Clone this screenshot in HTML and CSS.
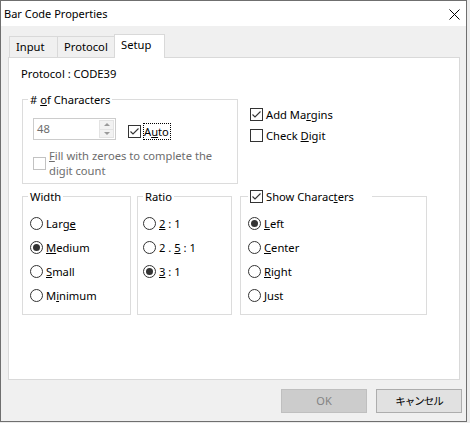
FILE: index.html
```html
<!DOCTYPE html>
<html>
<head>
<meta charset="utf-8">
<link rel="stylesheet" href="styles.css">
</head>
<body>
<div class="window">
  <div class="titlebar">
    <span class="title">Bar Code Properties</span>
    <svg class="close" width="11" height="11" viewBox="0 0 11 11"><path d="M0.5 0.5 L10.5 10.5 M10.5 0.5 L0.5 10.5" stroke="#000" stroke-width="1" fill="none"/></svg>
  </div>
  <div class="client">
    <div class="tabs">
      <div class="tab tab-input">Input</div>
      <div class="tab tab-protocol">Protocol</div>
      <div class="tab tab-setup active">Setup</div>
    </div>
    <div class="panel">
      <div class="proto">Protocol : CODE39</div>
      <div class="row1">
        <fieldset class="grp chars">
          <legend class="lg">#&nbsp;<u>o</u>f Characters</legend>
          <div class="spinrow">
            <div class="spin">
              <span class="spinval">48</span>
              <div class="spinbtns">
                <span class="sb up"><i></i></span>
                <span class="sb down"><i></i></span>
              </div>
            </div>
            <div class="chk auto">
              <span class="cb"><svg width="11" height="11" viewBox="0 0 11 11"><path d="M1.5 5.5 L4 8 L9.5 2.5" stroke="#333" stroke-width="1.1" fill="none"/></svg></span>
              <span class="focus">A<u>u</u>to</span>
            </div>
          </div>
          <div class="chk fill">
            <span class="cb dis"></span>
            <span class="dtext"><u>F</u>ill with zeroes to complete the<br>digit count</span>
          </div>
        </fieldset>
        <div class="opts">
          <div class="chk optrow">
            <span class="cb"><svg width="11" height="11" viewBox="0 0 11 11"><path d="M1.5 5.5 L4 8 L9.5 2.5" stroke="#333" stroke-width="1.1" fill="none"/></svg></span>
            <span>Add Ma<u>r</u>gins</span>
          </div>
          <div class="chk optrow">
            <span class="cb"></span>
            <span>Check <u>D</u>igit</span>
          </div>
        </div>
      </div>
      <div class="row2">
        <fieldset class="grp g-width">
          <legend class="lg">Width</legend>
          <div class="radios">
            <div class="rad"><span class="rb"></span><span>Larg<u>e</u></span></div>
            <div class="rad"><span class="rb on"></span><span><u>M</u>edium</span></div>
            <div class="rad"><span class="rb"></span><span><u>S</u>mall</span></div>
            <div class="rad"><span class="rb"></span><span>M<u>i</u>nimum</span></div>
          </div>
        </fieldset>
        <fieldset class="grp g-ratio">
          <legend class="lg">Ratio</legend>
          <div class="radios">
            <div class="rad"><span class="rb"></span><span><u>2</u> : 1</span></div>
            <div class="rad"><span class="rb"></span><span>2 . <u>5</u> : 1</span></div>
            <div class="rad"><span class="rb on"></span><span><u>3</u> : 1</span></div>
          </div>
        </fieldset>
        <fieldset class="grp g-show">
          <legend class="lg lg-chk">
            <span class="cb"><svg width="11" height="11" viewBox="0 0 11 11"><path d="M1.5 5.5 L4 8 L9.5 2.5" stroke="#333" stroke-width="1.1" fill="none"/></svg></span>
            <span>Show Charac<u>t</u>ers</span>
          </legend>
          <div class="radios">
            <div class="rad"><span class="rb on"></span><span><u>L</u>eft</span></div>
            <div class="rad"><span class="rb"></span><span><u>C</u>enter</span></div>
            <div class="rad"><span class="rb"></span><span><u>R</u>ight</span></div>
            <div class="rad"><span class="rb"></span><span><u>J</u>ust</span></div>
          </div>
        </fieldset>
      </div>
    </div>
    <div class="buttons">
      <button class="btn btn-ok" disabled>OK</button>
      <button class="btn btn-cancel">キャンセル</button>
    </div>
  </div>
</div>
</body>
</html>
```

FILE: styles.css
```css
html, body {
  margin: 0;
  padding: 0;
}
body {
  background: #ececec;
  font-family: "Noto Sans", "Segoe UI", "Liberation Sans", sans-serif;
  font-size: 11.2px;
  color: #000;
  width: 470px;
  height: 423px;
}
u {
  text-decoration-thickness: 1px;
  text-underline-offset: 1px;
}
.window {
  width: 467px;
  height: 422px;
  box-sizing: border-box;
  border: 1px solid #6f6f6f;
  background: #f0f0f0;
  display: flex;
  flex-direction: column;
}
.titlebar {
  height: 25px;
  flex: 0 0 25px;
  background: #fff;
  display: flex;
  align-items: center;
  padding: 0 6px 0 3px;
}
.title {
  flex: 1;
  font-size: 11px;
  line-height: 15px;
}
.close {
  display: block;
  margin-top: 1px;
}
.client {
  flex: 1;
  display: flex;
  flex-direction: column;
  padding: 8px 4px 0 7px;
}
.tabs {
  display: flex;
  align-items: flex-end;
  height: 23px;
  padding-left: 1px;
  position: relative;
  z-index: 1;
}
.tab {
  height: 21px;
  box-sizing: border-box;
  border: 1px solid #d9d9d9;
  border-bottom: none;
  padding-left: 6px;
  line-height: 19px;
  background: #f0f0f0;
  margin-left: -1px;
}
.tab-input { width: 49px; margin-left: 0; }
.tab-protocol { width: 58px; }
.tab-setup { width: 51px; }
.tab.active {
  height: 24px;
  margin-bottom: -1px;
  background: #fff;
  line-height: 19px;
}
.panel {
  width: 452px;
  height: 323px;
  flex: 0 0 323px;
  box-sizing: border-box;
  border: 1px solid #d9d9d9;
  background: #fff;
  padding: 8px 0 0 13px;
}
.proto {
  line-height: 15px;
  margin-left: -1px;
}
.grp {
  margin: 0;
  padding: 0;
  border: 1px solid #dcdcdc;
  min-width: 0;
  box-sizing: border-box;
}
.lg {
  padding: 0 2px;
  margin-left: 5px;
  line-height: 15px;
}
.row1 {
  display: flex;
  align-items: flex-start;
  margin-top: 11px;
}
.chars {
  width: 216px;
  padding-bottom: 5px;
}
.spinrow {
  display: flex;
  align-items: center;
  margin-top: 11px;
  margin-left: 10px;
}
.spin {
  width: 83px;
  height: 22px;
  box-sizing: border-box;
  border: 1px solid #cccccc;
  display: flex;
  align-items: stretch;
  background: #fff;
}
.spinval {
  flex: 1;
  padding-left: 3px;
  line-height: 20px;
  color: #6d6d6d;
}
.spinbtns {
  width: 16px;
  display: flex;
  flex-direction: column;
  padding: 1px 1px 1px 0;
  box-sizing: border-box;
}
.sb {
  flex: 1;
  background: #f2f2f2;
  border: 1px solid #e3e3e3;
  display: flex;
  align-items: center;
  justify-content: center;
}
.sb.down { border-top: none; }
.sb i {
  display: block;
  width: 0;
  height: 0;
  border-left: 3px solid transparent;
  border-right: 3px solid transparent;
}
.sb.up i { border-bottom: 3px solid #9a9a9a; }
.sb.down i { border-top: 3px solid #9a9a9a; }
.chk {
  display: flex;
  align-items: center;
}
.cb {
  width: 13px;
  height: 13px;
  flex: 0 0 13px;
  box-sizing: border-box;
  border: 1px solid #333;
  background: #fff;
  display: flex;
  align-items: center;
  justify-content: center;
  margin-right: 3px;
}
.cb svg { display: block; }
.cb.dis {
  border-color: #c2c2c2;
}
.auto {
  margin-left: 12px;
  margin-top: 5px;
}
.focus {
  border: 1px dotted #000;
  margin-left: -1px;
  padding: 0 1px 0 0;
  line-height: 15px;
}
.fill {
  margin-top: 8px;
  margin-left: 10px;
}
.dtext {
  color: #6d6d6d;
  line-height: 15px;
  white-space: nowrap;
}
.opts {
  margin-left: 12px;
  padding-top: 12px;
}
.optrow {
  height: 21px;
}
.row2 {
  display: flex;
  align-items: flex-start;
  margin-top: 5px;
}
.g-width { width: 109px; }
.g-ratio { width: 95px; margin-left: 6px; }
.g-show { width: 187px; margin-left: 8px; }
.lg-chk {
  display: flex;
  align-items: center;
  margin-left: 7px;
  width: 124px;
  box-sizing: border-box;
}
.radios {
  padding: 7px 0 7px 7px;
}
.g-ratio .radios {
  padding-left: 5px;
  padding-bottom: 31px;
}
.rad {
  height: 24px;
  display: flex;
  align-items: center;
}
.rb {
  width: 13px;
  height: 13px;
  flex: 0 0 13px;
  box-sizing: border-box;
  border: 1px solid #333;
  border-radius: 50%;
  background: #fff;
  margin-right: 3px;
  display: flex;
  align-items: center;
  justify-content: center;
}
.rb.on::after {
  content: "";
  width: 7px;
  height: 7px;
  border-radius: 50%;
  background: #333;
}
.buttons {
  display: flex;
  justify-content: flex-end;
  gap: 9px;
  margin-top: 9px;
}
.btn {
  width: 86px;
  height: 24px;
  box-sizing: border-box;
  margin: 0;
  padding: 0;
  font-family: "Noto Sans", "Noto Sans CJK JP", sans-serif;
  font-size: 11px;
  line-height: 20px;
}
.btn-ok {
  background: #cccccc;
  border: 1px solid #bfbfbf;
  color: #838383;
}
.btn-cancel {
  background: #e1e1e1;
  border: 1px solid #adadad;
  color: #000;
  font-family: "Noto Sans CJK JP", sans-serif;
  font-size: 10.5px;
  letter-spacing: -1px;
}
```
